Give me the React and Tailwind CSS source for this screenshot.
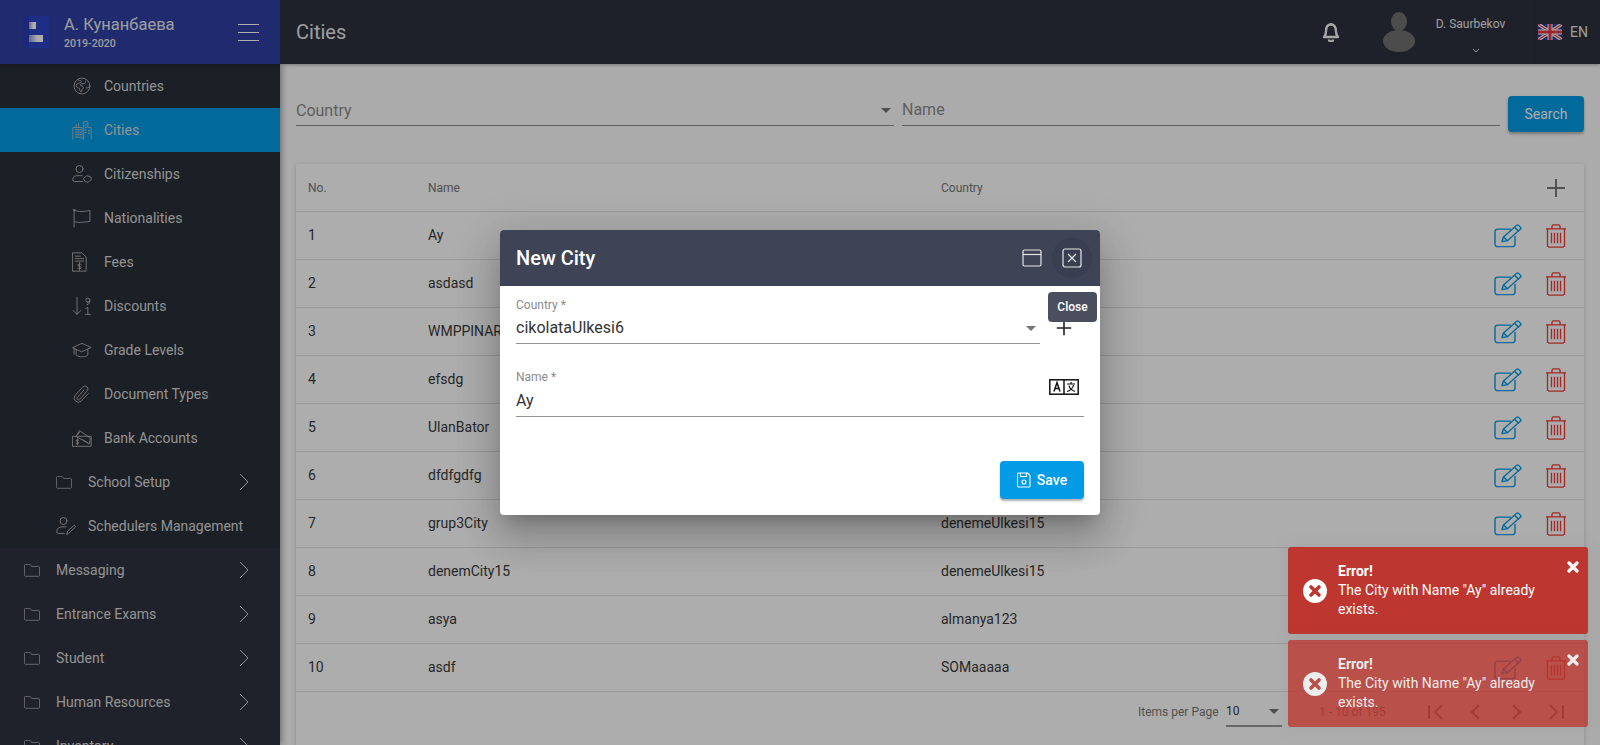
import React from "react";

const S = ({ children, w = 20, h = 20, vb = "0 0 24 24", cls = "", sw = 1 }) => (
  <svg width={w} height={h} viewBox={vb} fill="none" stroke="currentColor" strokeWidth={sw} strokeLinecap="round" strokeLinejoin="round" className={cls}>
    {children}
  </svg>
);

const Globe = () => (
  <S><circle cx="12" cy="12" r="9.500" /><path d="M7 4.500c1 1 3 .5 4 1.500s-1 2-2 2.500-4 .5-4 3 2.500 2 3.500 3 1 4 2 4.500 1-2 2-3 1.500-2.500.5-3.500-3.500-.5-3-2 3-1 4.500-1.500 2.500-1.500 2-3" /><path d="M17 14.500c1 0 2.500-.5 3.500-1" /></S>
);
const Cityi = () => (
  <S w={20} h={20}>
    <path d="M1 23V9h11v14M1 23M14 23V2h5v7h4v14" />
    <path d="M5 5V9M8 4V9" />
    <path d="M4.500 11.500h1M7 11.500h1M9.500 11.500h.5M4.500 14.500h1M7 14.500h1M9.500 14.500h.5M4.500 17.500h1M7 17.500h1M9.500 17.500h.5M4.500 20.500h1M7 20.500h1M9.500 20.500h.5M16 6h1M16 9h1M16 12h1M16 15h1M20 13h1M20 16h1" strokeWidth="1.400" />
  </S>
);
const Citizen = () => (
  <S><circle cx="9" cy="6" r="4.200" /><path d="M13 21H3a2 2 0 0 1-2-2v-1c0-3 3-4 6-4h5" /><path d="M14 17l4-3 5 2v3l-4 3-3-1z" /></S>
);
const Flag = () => (
  <S><circle cx="2.500" cy="2.500" r="1" /><path d="M2.500 3.500V23M3.500 3c4 1.500 8 1.500 11 1 3-.5 5-.5 7-1v13c-3 1-6 .5-9 1-3 .5-6 .5-9-.5" /></S>
);
const Fees = () => (
  <S vb="0 0 18 24" w={15} h={20}><path d="M1 1h11l5 5v17H1z" /><path d="M4 5h6M4 8h10M4 11h10" /><path d="M11 15c-1-1-4-1-4 .7s4 1.200 4 3-3 1.700-4 .7M9 13v9" /></S>
);
const Disc = () => (
  <S vb="0 0 24 24"><path d="M6 1.500V22M1.500 17.500L6 22l4.500-4.500" /><path d="M19 7.500a2.500 2.500 0 1 1 0-5 2.500 2.500 0 0 1 0 5zM21.500 5c0 3-1 5-3.500 5.500" /><path d="M16.500 15l2.500-1.500V22M16 22h6" /></S>
);
const Grad = () => (
  <S><path d="M1 9l11-5 11 5-11 5z" /><path d="M5 11.500V18c3 3 11 3 14 0v-6.500" /><path d="M2.500 10v7" /></S>
);
const Clip = () => (
  <S><path d="M19.500 11.500l-8.500 9a5 5 0 0 1-7.500-6.500L13 3.500a3.500 3.500 0 0 1 5 5l-9 10a1.700 1.700 0 0 1-2.500-2.500l8-9" /></S>
);
const Bank = () => (
  <S><path d="M1 10h22v12H1z" /><path d="M5 10l4-7 13 9-1 7-15-8" /><path d="M9 5l-2 3M13 14l6 4" /><path d="M8 14.500c-1-.7-3-.5-3 .8s3 1 3 2.500-2 1.500-3 .8M6.500 13v7.500" /></S>
);
const Folder = () => (
  <S vb="1 1 22 18" w={16} h={13}><path d="M1.500 3a1.500 1.500 0 0 1 1.500-1.500h6l2.500 3h9.500a1.500 1.500 0 0 1 1.500 1.500v10.500a1.500 1.500 0 0 1-1.500 1.500H3a1.500 1.500 0 0 1-1.500-1.500z" /></S>
);
const Sched = () => (
  <S><circle cx="9" cy="6" r="4.200" /><path d="M10 21H3a2 2 0 0 1-2-2v-1c0-3 3-5 7-5h4" /><path d="M13 22l1-4 8-7 1.500 2-8 7.500z" /></S>
);
const Chevron = () => (
  <svg width="10" height="18" viewBox="0 0 10 18" fill="none" stroke="currentColor" strokeWidth="1"><path d="M1 1l8 8-8 8" /></svg>
);

const sub = [
  ["Countries", Globe],
  ["Cities", Cityi, true],
  ["Citizenships", Citizen],
  ["Nationalities", Flag],
  ["Fees", Fees],
  ["Discounts", Disc],
  ["Grade Levels", Grad],
  ["Document Types", Clip],
  ["Bank Accounts", Bank],
];
const top = ["Messaging", "Entrance Exams", "Student", "Human Resources", "Inventory"];
const rows = [
  ["1", "Ay", ""],
  ["2", "asdasd", ""],
  ["3", "WMPPINAR", ""],
  ["4", "efsdg", ""],
  ["5", "UlanBator", ""],
  ["6", "dfdfgdfg", ""],
  ["7", "grup3City", "denemeUlkesi15"],
  ["8", "denemCity15", "denemeUlkesi15"],
  ["9", "asya", "almanya123"],
  ["10", "asdf", "SOMaaaaa"],
];

const Edit = () => (
  <svg width="28" height="24" viewBox="0 0 28 26" preserveAspectRatio="none" fill="none" stroke="#039be5" strokeWidth="1.400" strokeLinejoin="round" strokeLinecap="round">
    <path d="M21 13.500V22a2.500 2.500 0 0 1-2.500 2.500H3.500A2.500 2.500 0 0 1 1 22V8a2.500 2.500 0 0 1 2.500-2.500h13" />
    <path d="M8 19l1.500-5L22.500 1.500a1.500 1.500 0 0 1 2 0l2 2a1.500 1.500 0 0 1 0 2L13.500 18z" />
    <path d="M9.500 14l4 4M20.500 3.500l4 4" />
  </svg>
);
const Trash = () => (
  <svg width="22" height="24" viewBox="0 0 22 25" preserveAspectRatio="none" fill="none" stroke="#f03a36" strokeWidth="1.300" strokeLinejoin="round">
    <path d="M1 5h20M7 5V2.500A1.500 1.500 0 0 1 8.500 1h5A1.500 1.500 0 0 1 15 2.500V5" />
    <path d="M2.500 5v17.500A1.500 1.500 0 0 0 4 24h14a1.500 1.500 0 0 0 1.500-1.500V5" />
    <path d="M6.500 9v11M9.500 9v11M12.500 9v11M15.500 9v11" />
  </svg>
);
const Plus = ({ s = 20 }) => (
  <svg width={s} height={s} viewBox="0 0 20 20" stroke="currentColor" strokeWidth="2"><path d="M10 1v18M1 10h18" /></svg>
);
const Caret = ({ cls = "" }) => <span className={`w-0 h-0 border-x-[5px] border-x-transparent border-t-[5px] ${cls}`} />;

const Toast = ({ cls }) => (
  <div className={`relative w-[300px] h-[87px] rounded-[3px] bg-[#bd362f] text-white pl-[50px] pr-[15px] flex flex-col justify-center text-[14px] leading-[19px] shadow-[0_0_12px_#99999980] ${cls}`}>
    <svg width="24" height="24" viewBox="0 0 24 24" className="absolute left-[15px] top-[32px]">
      <circle cx="12" cy="12" r="12" fill="#fff" />
      <path d="M8 8l8 8M16 8l-8 8" stroke="#bd362f" strokeWidth="3.600" strokeLinecap="round" />
    </svg>
    <svg width="12" height="12" viewBox="0 0 12 12" className="absolute right-[9px] top-[14px]">
      <path d="M2 2l8 8M10 2l-8 8" stroke="#fff" strokeWidth="3.200" strokeLinecap="round" />
    </svg>
    <div className="font-bold">Error!</div>
    <div className="w-[215px]">The City with Name "Ay" already exists.</div>
  </div>
);

export default function App() {
  return (
    <div className="relative h-screen overflow-hidden flex flex-col bg-[#fcfcfc] font-['Roboto',sans-serif] text-[14px]">
      <header className="h-16 flex shrink-0 bg-[#2e323f] text-[#e8e8e8] shadow-[0_1px_3px_#0000004d] z-20">
        <div className="w-[280px] shrink-0 flex items-center pl-[23px] pr-[21px] bg-[#303fa3]">
          <svg width="26" height="32" viewBox="0 0 26 32" className="shrink-0">
            <defs>
              <linearGradient id="logoBar" x1="0" y1="0" x2="1" y2="0">
                <stop offset="0" stopColor="#8d97d8" />
                <stop offset="0.6" stopColor="#ffffff" />
              </linearGradient>
            </defs>
            <rect width="26" height="32" fill="#2f44c4" />
            <rect width="6" height="32" fill="#2a3cb0" />
            <rect x="6" y="6" width="7" height="7" fill="url(#logoBar)" />
            <rect x="6" y="19" width="14" height="7" fill="url(#logoBar)" />
          </svg>
          <div className="ml-[15px] flex-1">
            <div className="text-[16.500px] leading-[20px] mt-[2px]">А. Кунанбаева</div>
            <div className="text-[10.600px] leading-[14px] font-medium mt-[2px]">2019-2020</div>
          </div>
          <div className="w-[21px] flex flex-col gap-[7px]">
            <span className="h-[1px] bg-white" />
            <span className="h-[1px] bg-white" />
            <span className="h-[1px] bg-white" />
          </div>
        </div>
        <div className="flex-1 flex items-center pl-4">
          <h1 className="text-[20px] flex-1">Cities</h1>
          <svg width="18" height="20" viewBox="0 0 18 20" fill="none" stroke="#f5f5f5" strokeWidth="2.400" className="mr-[43px]">
            <path d="M2 15c1.500-1.500 2-2.500 2-5.500C4 5 5.500 2.500 9 2.500S14 5 14 9.500c0 3 .5 4 2 5.500z" strokeLinejoin="round" />
            <path d="M9 1v1M7 17.500a2 2 0 0 0 4 0" />
          </svg>
          <svg width="32" height="40" viewBox="0 0 32 40" className="mr-[20px] text-[#707070]" fill="currentColor">
            <ellipse cx="16" cy="9.500" rx="8" ry="9.500" />
            <ellipse cx="16" cy="29" rx="16" ry="11" />
          </svg>
          <div className="w-[100px] h-full relative flex flex-col items-center pt-[16px] pr-[28px] border-r border-[#292c38]">
            <span className="text-[12px] leading-[16px] whitespace-nowrap">D. Saurbekov</span>
            <svg width="8" height="5" viewBox="0 0 8 5" fill="none" stroke="currentColor" strokeWidth="1" className="mt-[16px] ml-[10px]"><path d="M1 1l3 3 3-3" /></svg>
          </div>
          <svg width="24" height="16" viewBox="0 0 24 16" className="ml-[3px] mr-[8px]">
            <rect width="24" height="16" fill="#2d3f9e" />
            <path d="M0 0l24 16M24 0L0 16" stroke="#fff" strokeWidth="3.500" />
            <path d="M0 0l24 16M24 0L0 16" stroke="#e2394a" strokeWidth="1.200" />
            <path d="M12 0v16M0 8h24" stroke="#fff" strokeWidth="5" />
            <path d="M12 0v16M0 8h24" stroke="#e2394a" strokeWidth="3" />
          </svg>
          <span className="text-[14px] w-[30px]">EN</span>
        </div>
      </header>

      <div className="flex-1 flex min-h-0">
        <aside className="w-[280px] shrink-0 bg-[#2f333f] text-[#d9d9d9] shadow-[2px_0_6px_#00000055] z-10 overflow-hidden">
          <div className="bg-[#292e38]">
            {sub.map(([label, Icon, active]) => (
              <div key={label} className={`h-11 flex items-center pl-[72px] ${active ? "bg-[#039be5]" : ""}`}>
                <span className="w-8 shrink-0 text-[#bdbdbd]"><Icon /></span>
                <span>{label}</span>
              </div>
            ))}
            <div className="h-11 flex items-center pl-14 pr-[31px]">
              <span className="w-8 shrink-0 text-[#bdbdbd]"><Folder /></span>
              <span className="flex-1">School Setup</span>
              <Chevron />
            </div>
            <div className="h-11 flex items-center pl-14">
              <span className="w-8 shrink-0 text-[#bdbdbd]"><Sched /></span>
              <span>Schedulers Management</span>
            </div>
          </div>
          {top.map((label) => (
            <div key={label} className="h-11 flex items-center pl-6 pr-[31px]">
              <span className="w-8 shrink-0 text-[#bdbdbd]"><Folder /></span>
              <span className="flex-1">{label}</span>
              <Chevron />
            </div>
          ))}
        </aside>

        <main className="flex-1 min-w-0 px-4 pt-8 overflow-hidden">
          <div className="flex items-start gap-2 h-[68px]">
            <div className="w-[598px] h-[30px] border-b border-[#8f8f8f] flex items-center justify-between text-[16px] text-[#8d8d8d]">
              <span>Country</span>
              <Caret cls="border-t-[#757575] mr-[3px]" />
            </div>
            <div className="w-[598px] h-[30px] border-b border-[#8f8f8f] text-[16px] text-[#8d8d8d] leading-[28px]">Name</div>
            <button className="w-[76px] h-9 rounded-[4px] bg-[#039be5] text-white text-[14px] shadow-[0_2px_3px_#0000004d]">Search</button>
          </div>

          <section className="bg-white shadow-[0_1px_4px_#00000033] rounded-[2px] h-[600px] text-[#3a3a3a]">
            <div className="h-[48px] flex items-center pl-3 pr-[18px] border-b border-[#e3e3e3] text-[12px] text-[#777777]">
              <span className="w-[120px]">No.</span>
              <span className="w-[513px]">Name</span>
              <span className="flex-1">Country</span>
              <span className="text-[#777777]"><Plus /></span>
            </div>
            {rows.map(([n, name, country]) => (
              <div key={n} className="h-12 flex items-center pl-3 pr-[17px] border-b border-[#e3e3e3] last:border-b-0">
                <span className="w-[120px]">{n}</span>
                <span className="w-[513px]">{name}</span>
                <span className="flex-1">{country}</span>
                <span className="mr-[23px] flex"><Edit /></span>
                <span className="flex"><Trash /></span>
              </div>
            ))}
            <div className="h-[40px] flex items-center pl-[842px] text-[12px] text-[#777777]">
              <span className="w-[88px]">Items per Page</span>
              <div className="w-[56px] h-[26px] border-b-2 border-[#999999] flex items-center justify-between pr-[3px] pb-[4px] text-[#3a3a3a] mt-[4px]">
                <span>10</span>
                <Caret cls="border-t-[#757575]" />
              </div>
              <span className="ml-[37px] w-[107px]">1 - 10 of 195</span>
              <div className="flex items-center gap-5 text-[#7a7a7a]">
                {["M3 3v14M16 3l-7 7 7 7", "M13 3l-7 7 7 7", "M7 3l7 7-7 7", "M4 3l7 7-7 7M17 3v14"].map((d) => (
                  <svg key={d} width="20" height="20" viewBox="0 0 20 20" fill="none" stroke="currentColor" strokeWidth="2"><path d={d} /></svg>
                ))}
              </div>
            </div>
          </section>
        </main>
      </div>

      <div className="absolute inset-0 z-30 bg-black/32 flex items-center justify-center">
        <div className="relative w-[600px] h-[285px] rounded-[4px] bg-white overflow-visible shadow-[0_11px_15px_-7px_#00000033,0_24px_38px_3px_#00000024,0_9px_46px_8px_#0000001f]">
          <div className="h-14 rounded-t-[4px] bg-[#3e4355] text-white flex items-center pl-4">
            <h2 className="text-[20px] font-medium flex-1">New City</h2>
            <svg width="20" height="20" viewBox="0 0 20 20" fill="none" stroke="#e8e8e8" strokeWidth="1.200" className="mr-[10px]">
              <rect x="1" y="2" width="18" height="16" rx="1.500" /><path d="M1 6.500h18" />
            </svg>
            <div className="w-10 h-10 rounded-full bg-[#393e50] mr-2 flex items-center justify-center">
              <svg width="20" height="20" viewBox="0 0 20 20" fill="none" stroke="#e8e8e8" strokeWidth="1.200">
                <rect x="1" y="1" width="18" height="18" rx="2" /><path d="M6 6l8 8M14 6l-8 8" />
              </svg>
            </div>
          </div>
          <div className="absolute left-[548px] top-[62px] w-[49px] h-[30px] rounded-[4px] bg-[#4a4e5e] text-white text-[12px] font-medium flex items-center justify-center z-10">Close</div>

          <div className="px-4 pt-[12px]">
            <div className="flex items-start">
              <div className="w-[524px] h-[46px] border-b border-[#949494]">
                <div className="text-[12px] leading-[14px] text-[#8a8a8a]">Country *</div>
                <div className="flex items-center justify-between h-[24px] mt-[4px] text-[16px] text-[#333333]">
                  <span>cikolataUlkesi6</span>
                  <Caret cls="border-t-[#757575] mr-[4px]" />
                </div>
              </div>
              <span className="ml-[16px] mt-[22px] text-[#222222]"><Plus s={16} /></span>
            </div>
            <div className="relative mt-[26px] h-[47px] border-b border-[#949494]">
              <div className="text-[12px] leading-[14px] text-[#8a8a8a]">Name *</div>
              <div className="h-[24px] mt-[5px] text-[16px] leading-[24px] text-[#333333]">Ay</div>
              <svg width="30" height="16" viewBox="0 0 30 16" className="absolute right-[5px] top-[9px]" fill="none" stroke="#111111" strokeWidth="1.500">
                <rect x=".8" y=".8" width="28.400" height="14.400" />
                <path d="M15 .8v14.400" />
                <path d="M5 12.500L8 3.500l3 9M6 9.500h4" />
                <path d="M18 5h8M22 3v2M20 6.500c.5 2.500 3 5 6 6M24.500 6c-.5 3-3 5.500-6.500 6.500" strokeWidth="1.200" />
              </svg>
            </div>
            <div className="flex justify-end mt-[44px]">
              <button className="w-[84px] h-[38px] rounded-[4px] bg-[#039be5] text-white text-[14px] font-medium flex items-center justify-center gap-[6px] shadow-[0_2px_2px_#0000004d]">
                <svg width="14" height="16" viewBox="0 0 14 16" fill="none" stroke="#fff" strokeWidth="1.100">
                  <path d="M1.500 1h9l2.500 2.500V14a1 1 0 0 1-1 1H1.500a1 1 0 0 1-1-1V2a1 1 0 0 1 1-1z" />
                  <path d="M3.500 1v3.500h6V1" /><circle cx="7" cy="10" r="2" />
                </svg>
                Save
              </button>
            </div>
          </div>
        </div>

        <div className="absolute right-[12px] bottom-[18px] flex flex-col gap-[6px]">
          <Toast cls="" />
          <Toast cls="opacity-[.78]" />
        </div>
      </div>
    </div>
  );
}
